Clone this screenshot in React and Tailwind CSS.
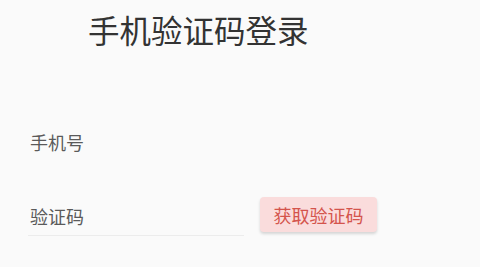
import React from "react";

export default function App() {
  return (
    <div
      className="w-[480px] h-[267px] bg-[#fafafa] overflow-hidden"
      style={{ fontFamily: '"Noto Sans CJK SC", "Noto Sans", sans-serif' }}
    >
      <div className="pl-[88px] pt-[14px] text-[31.5px] leading-[31px] text-[#333333]">
        手机验证码登录
      </div>
      <div className="pl-[30px] mt-[87px] text-[18px] leading-[20px] text-[#5a5a5a]">
        手机号
      </div>
      <div className="flex items-center mt-[45px] pl-[28px]">
        <div className="w-[216px] border-b border-[#ececec] pl-[2px] pt-[9px] pb-[9px] text-[18px] leading-[20px] text-[#5a5a5a]">
          验证码
        </div>
        <button className="ml-[16px] mt-[-4px] w-[117px] h-[35px] rounded-[4px] bg-[#fadcdc] text-[#d4544c] text-[18px] leading-[20px] shadow-[0_2px_3px_rgba(0,0,0,0.15)]">
          获取验证码
        </button>
      </div>
    </div>
  );
}
